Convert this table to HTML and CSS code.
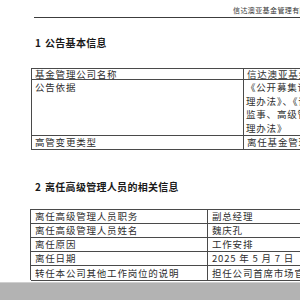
FILE: index.html
```
<!DOCTYPE html>
<html lang="zh-CN">
<head>
<meta charset="utf-8">
<title>公告</title>
<link rel="stylesheet" href="styles.css">
</head>
<body>
<div class="page">
  <div class="header"><span class="header-text">信达澳亚基金管理有限公司关于高级管理人员变更的公告</span></div>
  <h2 class="section-title"><span class="num">1</span>公告基本信息</h2>
  <div class="tbl tbl-basic">
    <div class="cell row-a">基金管理公司名称</div>
    <div class="cell row-a">信达澳亚基金管理有限公司</div>
    <div class="cell row-b">公告依据</div>
    <div class="cell row-b multi">《公开募集证券投资基金信息披露管<br>理办法》、《证券基金经营机构董事、<br>监事、高级管理人员及从业人员监督管<br>理办法》</div>
    <div class="cell row-c">高管变更类型</div>
    <div class="cell row-c">离任基金管理公司副总经理</div>
  </div>
  <h2 class="section-title second"><span class="num">2</span>离任高级管理人员的相关信息</h2>
  <div class="tbl tbl-info">
    <div class="cell">离任高级管理人员职务</div>
    <div class="cell">副总经理</div>
    <div class="cell">离任高级管理人员姓名</div>
    <div class="cell">魏庆孔</div>
    <div class="cell">离任原因</div>
    <div class="cell">工作安排</div>
    <div class="cell">离任日期</div>
    <div class="cell">2025 年 5 月 7 日</div>
    <div class="cell last">转任本公司其他工作岗位的说明</div>
    <div class="cell last">担任公司首席市场官</div>
  </div>
</div>
<div class="bottom-bar"></div>
</body>
</html>
```
FILE: styles.css
```
html, body {
  margin: 0;
  padding: 0;
  background: #ffffff;
}
body {
  width: 300px;
  height: 300px;
  overflow: hidden;
  font-family: "Noto Sans CJK SC", "Noto Sans", sans-serif;
  color: #2a2a2a;
}
.page {
  width: 600px;
  padding-left: 31px;
  height: 282px;
}
.header {
  margin-left: 3px;
  height: 18px;
  box-sizing: border-box;
  border-bottom: 1px solid #3c3c3c;
  padding-left: 199px;
  padding-top: 5px;
  font-size: 7px;
  line-height: 10px;
  letter-spacing: 0.4px;
  white-space: nowrap;
  color: #333;
}
.section-title {
  margin: 18px 0 18px 4px;
  font-size: 10px;
  line-height: 14px;
  font-weight: 700;
  letter-spacing: 0.3px;
  color: #1a1a1a;
  white-space: nowrap;
}
.section-title.second {
  margin-top: 30px;
  margin-bottom: 15px;
}
.num {
  display: inline-block;
  width: 10px;
}
.tbl {
  display: grid;
  border-top: 1px solid #4a4a4a;
  border-left: 1px solid #4a4a4a;
  font-size: 9.5px;
  letter-spacing: 0.8px;
  color: #2e2e2e;
}
.tbl-basic {
  grid-template-columns: 212px 360px;
}
.tbl-info {
  margin-left: -1px;
  grid-template-columns: 177px 360px;
  grid-auto-rows: 14px;
}
.cell {
  box-sizing: border-box;
  border-right: 1px solid #4a4a4a;
  border-bottom: 1px solid #4a4a4a;
  padding-left: 3px;
  white-space: nowrap;
  line-height: 13px;
}
.tbl-info .cell {
  padding-left: 4px;
}
.tbl-info .cell.last {
  height: 15px;
  line-height: 14px;
}
.row-a {
  height: 11px;
  line-height: 10px;
}
.row-b {
  height: 56px;
  padding-top: 1px;
  line-height: 13.5px;
}
.row-b.multi {
  padding-left: 2px;
}
.row-c {
  height: 14px;
}
.bottom-bar {
  height: 18px;
  background: #b3b3b3;
  border-top: 1px solid #cfcfcf;
  box-sizing: border-box;
}
```
